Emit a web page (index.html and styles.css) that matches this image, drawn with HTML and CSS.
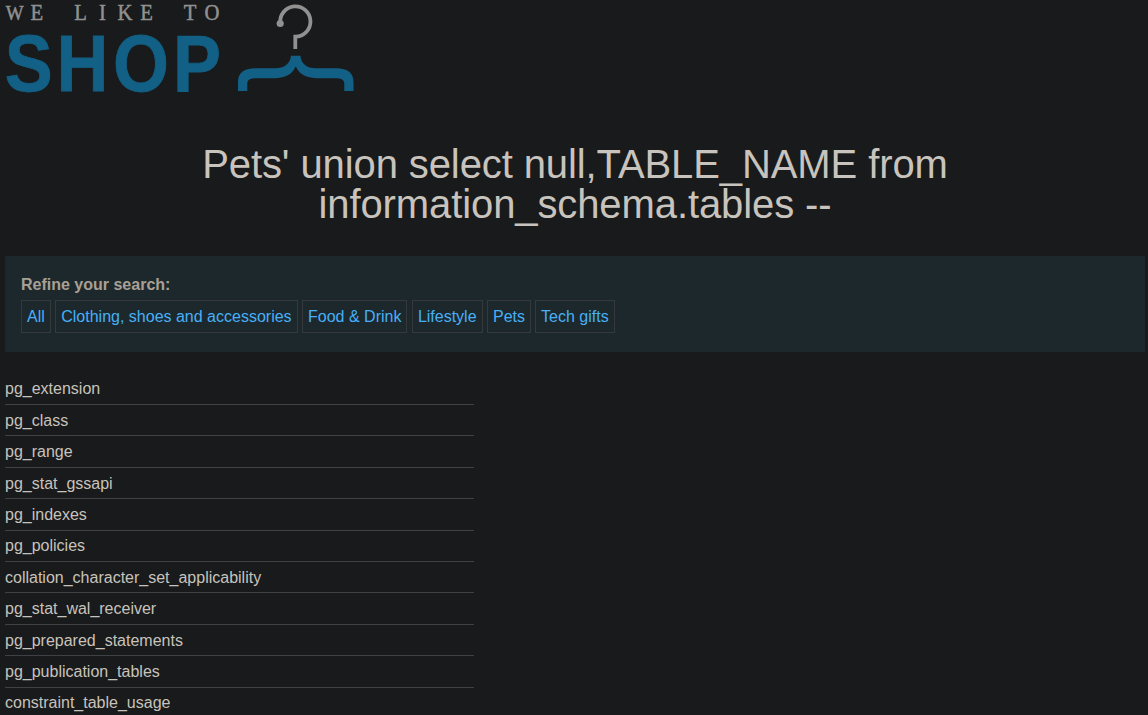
FILE: index.html
```
<!DOCTYPE html>
<html lang="en">
<head>
<meta charset="utf-8">
<title>We like to shop</title>
<link rel="stylesheet" href="styles.css">
</head>
<body>
<main class="page">
<header class="logo">
<svg class="logo-art" width="360" height="100" viewBox="0 0 360 100" role="img">
<text class="logo-tagline" transform="translate(0 20.4) scale(.9 1)" x="16.3 41 65 89.5 113.9 138.8 163 188 211.1 235.5"><tspan class="logo-wide">W</tspan>E LIKE TO</text>
<text class="logo-name" transform="translate(0 90.6) scale(.91 1)" x="31.7 90.6 155 216.5">SHOP</text>
<path class="hanger-hook" d="M280.4 23.5A15.1 15.1 0 1 1 295.3 36.6V49"/>
<circle class="hanger-tip" cx="280.2" cy="23.5" r="3.6"/>
<path class="hanger-bar" d="M291 55.7H300.4C301.4 64 306.5 68.2 316 68.2H336C348 68.2 353.5 73 353.5 82V91H344.3V84C344.3 79.4 341 78.3 335 78.3H322C307 78.3 300 75.5 295.8 66.5C291.5 75.5 284.5 78.3 270 78.3H257C250.5 78.3 247.3 79.6 247.3 84V91H238V82C238 73 243.5 68.2 255.5 68.2H275C284.5 68.2 290 64 291 55.7Z"/>
</svg>
</header>
<h1 class="title">Pets' union select null,TABLE_NAME from information_schema.tables --</h1>
<section class="filters">
<div class="filters-label">Refine your search:</div>
<nav class="filters-list">
<a class="chip">All</a>
<a class="chip">Clothing, shoes and accessories</a>
<a class="chip">Food &amp; Drink</a>
<a class="chip">Lifestyle</a>
<a class="chip">Pets</a>
<a class="chip">Tech gifts</a>
</nav>
</section>
<div class="results">
<div class="row">pg_extension</div>
<div class="row">pg_class</div>
<div class="row">pg_range</div>
<div class="row">pg_stat_gssapi</div>
<div class="row">pg_indexes</div>
<div class="row">pg_policies</div>
<div class="row">collation_character_set_applicability</div>
<div class="row">pg_stat_wal_receiver</div>
<div class="row">pg_prepared_statements</div>
<div class="row">pg_publication_tables</div>
<div class="row">constraint_table_usage</div>
</div>
</main>
</body>
</html>
```
FILE: styles.css
```
* { box-sizing: border-box; }
body {
  margin: 0;
  height: 715px;
  overflow: hidden;
  background: #181a1b;
  color: #c8c3bc;
  font: 16px/22.4px "Liberation Sans", Arial, sans-serif;
}
.page { padding: 0 3px 0 5px; }
.logo { height: 100px; margin-left: -5px; }
.logo-art { display: block; overflow: visible; }
.logo-tagline {
  font: 23px "Liberation Serif", serif;
  fill: #919191;
  stroke: #919191;
  stroke-width: .5;
  text-anchor: middle;
}
.logo-wide { font-size: 21px; }
.logo-name {
  font: bold 79px "Liberation Sans", Arial, sans-serif;
  fill: #126085;
  stroke: #126085;
  stroke-width: .8;
  text-anchor: middle;
}
.hanger-hook { fill: none; stroke: #919191; stroke-width: 3.8; }
.hanger-tip { fill: #919191; }
.hanger-bar { fill: #126085; }
.title {
  margin: 44px auto 0;
  width: 860px;
  font-size: 40px;
  line-height: 40px;
  font-weight: normal;
  letter-spacing: -.1px;
  text-align: center;
}
.filters {
  height: 96px;
  margin-top: 32px;
  padding: 17.6px 16px 0;
  background: #1d282c;
}
.filters-label { font-weight: bold; color: #a8a095; }
.filters-list { margin-top: 4px; }
.chip {
  display: inline-block;
  padding: 4.9px 5px 3.7px;
  border: 1px solid #35393b;
  color: #47b0f8;
}
.chip:last-child { margin-left: -.4px; }
.results { width: 469px; margin-top: 21.6px; }
.row { padding: 4.8px 0 3.2px; border-bottom: 1px solid #3e4244; }
```
